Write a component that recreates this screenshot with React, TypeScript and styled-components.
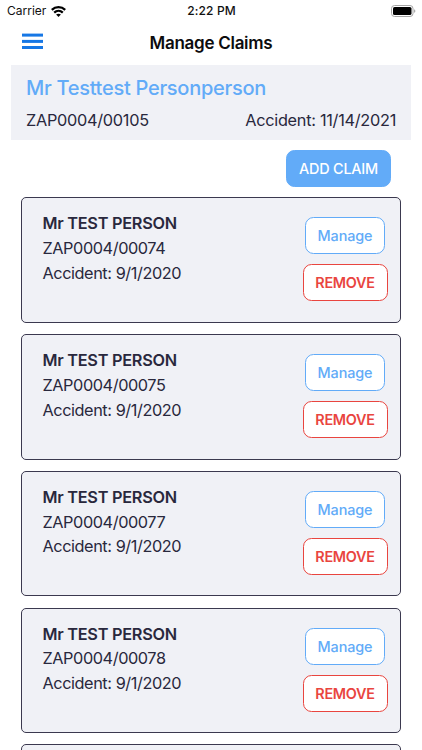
import React from "react";
import styled, { createGlobalStyle } from "styled-components";

const navy = "#29283d";
const sky = "#62abf8";
const red = "#e9453f";

const GlobalStyle = createGlobalStyle`
  * { box-sizing: border-box; }
  html, body { margin: 0; background: #fff; }
  body { overflow: hidden; font-family: Inter, "Liberation Sans", sans-serif; }
`;

const Screen = styled.div`
  width: 422px;
  height: 750px;
  overflow: hidden;
  background: #fff;
  color: ${navy};
`;

const StatusBar = styled.header`
  display: grid;
  grid-template-columns: 1fr auto 1fr;
  align-items: center;
  height: 22px;
  padding: 0 6px 0 7px;
  color: #111;
  font-size: 12px;
  line-height: 22px;
`;

const Carrier = styled.div`
  display: flex;
  align-items: center;
  gap: 5px;
`;

const Clock = styled.div`
  font-weight: 500;
  letter-spacing: 0.15px;
`;

const Battery = styled.svg`
  justify-self: end;
`;

const NavBar = styled.nav`
  display: grid;
  grid-template-columns: 1fr auto 1fr;
  height: 43.3px;
  padding: 0 22px;
`;

const MenuButton = styled.button`
  justify-self: start;
  height: 16px;
  margin: 11px 0 0;
  padding: 0;
  border: 0;
  background: none;
  svg { display: block; }
`;

const Title = styled.h1`
  margin: 0;
  color: #0c0c0e;
  font-size: 17px;
  font-weight: 600;
  line-height: 43px;
  letter-spacing: -0.28px;
`;

const Summary = styled.section`
  height: 74.4px;
  margin: 0 11px;
  padding: 8px 15px 0;
  background: #f0f1f6;
`;

const PersonName = styled.h2`
  margin: 0;
  color: ${sky};
  font-size: 20px;
  font-weight: 500;
  line-height: 30px;
  letter-spacing: -0.28px;
`;

const SummaryRow = styled.div`
  display: flex;
  justify-content: space-between;
  margin-top: 5px;
  font-size: 16.3px;
  line-height: 24px;
  letter-spacing: -0.28px;
`;

const Actions = styled.div`
  display: flex;
  justify-content: flex-end;
  height: 57.8px;
  padding: 10.3px 31px 0 0;
`;

const Button = styled.button<{ $kind: "add" | "manage" | "remove" }>`
  width: ${({ $kind }) => ({ add: 105, manage: 79.5, remove: 85 })[$kind]}px;
  height: 37px;
  padding: 0;
  border: 1px solid ${({ $kind }) => ($kind === "remove" ? red : sky)};
  border-radius: 8.5px;
  background: ${({ $kind }) => ($kind === "add" ? sky : "#fff")};
  color: ${({ $kind }) => ({ add: "#fff", manage: sky, remove: red })[$kind]};
  font: ${({ $kind }) => ($kind === "remove" ? 600 : 500)} 14.4px/35px Inter, sans-serif;
  letter-spacing: ${({ $kind }) => ({ add: -0.2, manage: -0.1, remove: -0.3 })[$kind]}px;
`;

const ClaimList = styled.main`
  display: flex;
  flex-direction: column;
  gap: 11.25px;
  padding: 0 21px;
`;

const ClaimCard = styled.article`
  display: flex;
  flex: none;
  justify-content: space-between;
  height: 125.5px;
  padding: 12.5px 12.5px 0 20.5px;
  border: 1px solid #3b394f;
  border-radius: 5px;
  background: #f0f1f6;
`;

const ClaimInfo = styled.div`
  padding-top: 0.4px;
  font-size: 16.3px;
  line-height: 24.75px;
  letter-spacing: -0.43px;
`;

const ClaimName = styled.div`
  font-weight: 600;
  letter-spacing: -0.27px;
`;

const ClaimButtons = styled.div`
  display: flex;
  flex-direction: column;
  align-items: center;
  gap: 10px;
  padding-top: 6.5px;
`;

const claims = ["ZAP0004/00074", "ZAP0004/00075", "ZAP0004/00077", "ZAP0004/00078"];

export default function App() {
  return (
    <>
      <GlobalStyle />
      <Screen>
        <StatusBar>
          <Carrier>
            <span>Carrier</span>
            <svg width="15" height="11" viewBox="0 0 15 11" fill="none" stroke="#000" strokeWidth="2.3">
              <path d="M.8 3.8C4.6.3 10.4.3 14.2 3.8" />
              <path d="M3.2 6.6c2.5-2.3 6.1-2.3 8.6 0" />
              <path d="M7.5 11 5.1 8.6c1.3-1.2 3.5-1.2 4.8 0Z" fill="#000" stroke="none" />
            </svg>
          </Carrier>
          <Clock>2:22 PM</Clock>
          <Battery width="25" height="12" viewBox="0 0 25 12">
            <rect x=".5" y=".5" width="21.5" height="11" rx="3" fill="none" stroke="#a5a5a5" />
            <rect x="2" y="2" width="18.5" height="8" rx="1.6" fill="#000" />
            <path d="M23.2 4.2c1.5.5 1.5 3.1 0 3.6Z" fill="#999" />
          </Battery>
        </StatusBar>
        <NavBar>
          <MenuButton aria-label="Menu">
            <svg width="21" height="16" viewBox="0 0 21 16" fill="#1677e5">
              <rect y=".6" width="21" height="3" />
              <rect y="6.9" width="21" height="3" />
              <rect y="13" width="21" height="3" />
            </svg>
          </MenuButton>
          <Title>Manage Claims</Title>
        </NavBar>
        <Summary>
          <PersonName>Mr Testtest Personperson</PersonName>
          <SummaryRow>
            <span>ZAP0004/00105</span>
            <span>Accident: 11/14/2021</span>
          </SummaryRow>
        </Summary>
        <Actions>
          <Button $kind="add">ADD CLAIM</Button>
        </Actions>
        <ClaimList>
          {claims.map((id) => (
            <ClaimCard key={id}>
              <ClaimInfo>
                <ClaimName>Mr TEST PERSON</ClaimName>
                <div>{id}</div>
                <div>Accident: 9/1/2020</div>
              </ClaimInfo>
              <ClaimButtons>
                <Button $kind="manage">Manage</Button>
                <Button $kind="remove">REMOVE</Button>
              </ClaimButtons>
            </ClaimCard>
          ))}
          <ClaimCard aria-hidden="true" />
        </ClaimList>
      </Screen>
    </>
  );
}
